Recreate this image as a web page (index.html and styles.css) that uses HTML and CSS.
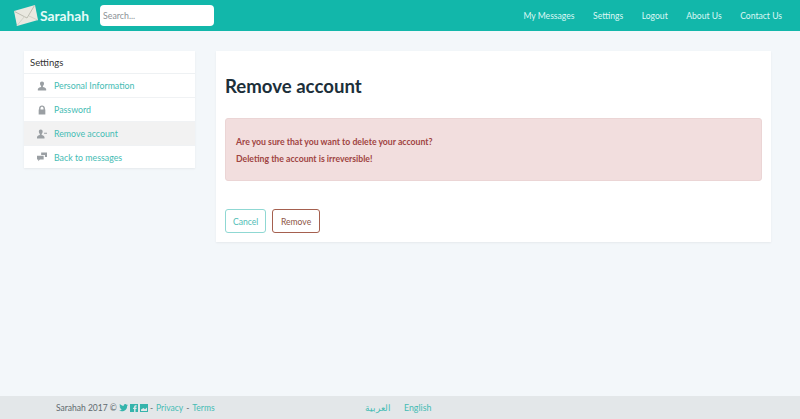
FILE: index.html
```html
<!DOCTYPE html>
<html lang="en">
<head>
  <meta charset="UTF-8" />
  <meta name="viewport" content="width=device-width, initial-scale=1.0" />
  <title>Sarahah - Remove account</title>
  <link rel="stylesheet" href="styles.css">
</head>
<body>
  <nav class="navbar">
    <a class="brand" href="#">
      <svg class="brand-icon" width="26" height="21" viewBox="0 0 26 21">
        <polygon points="1,6 22,0 25,15 4,21" fill="#e9e8e0"/>
        <polyline points="1.5,6.5 14,13 21.5,0.5" fill="none" stroke="#bdbdb2" stroke-width="1"/>
        <polyline points="4,20.5 11.5,11.5" fill="none" stroke="#d3d3ca" stroke-width="1"/>
        <polyline points="16,11 24.5,15" fill="none" stroke="#d3d3ca" stroke-width="1"/>
      </svg>
      <span>Sarahah</span>
    </a>
    <input class="search" type="text" placeholder="Search..." />
    <ul class="nav-links">
      <li><a href="#">My Messages</a></li>
      <li><a href="#">Settings</a></li>
      <li><a href="#">Logout</a></li>
      <li><a href="#">About Us</a></li>
      <li><a href="#">Contact Us</a></li>
    </ul>
  </nav>

  <div class="content">
    <aside class="sidebar">
      <div class="sidebar-title">Settings</div>
      <a class="sidebar-item" href="#">
        <svg class="item-icon" width="10" height="10" viewBox="0 0 12 11"><path d="M6 0c1.600 0 2.400 1.100 2.400 2.600 0 1.200-.6 2.400-1.300 2.900v1.100c1.600.5 3.900 1.200 3.900 2.600V11H1V9.200c0-1.400 2.300-2.100 3.900-2.600V5.500C4.200 5 3.600 3.800 3.600 2.600 3.600 1.100 4.400 0 6 0z"/></svg>
        Personal Information
      </a>
      <a class="sidebar-item" href="#">
        <svg class="item-icon" width="10" height="10" viewBox="0 0 12 11"><path d="M2.500 5V3.500C2.500 1.500 4 0 6 0s3.500 1.500 3.500 3.500V5h.5v6H2V5zM4.200 5h3.600V3.500C7.800 2.500 7 1.700 6 1.700s-1.800.8-1.800 1.800z"/></svg>
        Password
      </a>
      <a class="sidebar-item active" href="#">
        <svg class="item-icon" width="10" height="10" viewBox="0 0 12 11"><path d="M4.500 0c1.500 0 2.300 1.100 2.300 2.600 0 1.200-.6 2.400-1.200 2.900v1.100c1.500.5 3.400 1.200 3.400 2.600V11H0V9.200c0-1.400 1.900-2.100 3.400-2.600V5.500C2.800 5 2.200 3.800 2.200 2.600 2.200 1.100 3 0 4.500 0zM8.500 4h3.500v1.200H8.500z"/></svg>
        Remove account
      </a>
      <a class="sidebar-item" href="#">
        <svg class="item-icon" width="10" height="10" viewBox="0 0 12 11"><path d="M5 0h7v5.500H9.500V3H5zM0 4h8v4.500H3.500L1.500 10.500V8.500H0z"/></svg>
        Back to messages
      </a>
    </aside>

    <main class="panel">
      <h1>Remove account</h1>
      <div class="alert">
        <p>Are you sure that you want to delete your account?</p>
        <p>Deleting the account is irreversible!</p>
      </div>
      <div class="actions">
        <a class="btn btn-cancel" href="#">Cancel</a>
        <a class="btn btn-remove" href="#">Remove</a>
      </div>
    </main>
  </div>

  <footer class="footer">
    <div class="footer-left">
      <span>Sarahah 2017 &copy;</span>
      <svg class="social" width="9" height="8" viewBox="0 0 9 8"><path d="M9 1c-.3.2-.7.3-1 .3.4-.2.6-.5.8-.9-.3.2-.7.3-1.100.4C7.300.3 6.800 0 6.300 0 5.200 0 4.500 1 4.700 2 3.200 1.900 1.800 1.200.9.1.400 1 .7 2 1.400 2.500c-.3 0-.6-.1-.8-.2 0 .9.600 1.700 1.500 1.900-.3.1-.6.1-.8 0 .2.700.9 1.300 1.700 1.300C2.200 6.100 1.100 6.500 0 6.400 2.900 8.300 8.300 7 8.100 2c.4-.3.700-.6.900-1z"/></svg>
      <svg class="social" width="8" height="8" viewBox="0 0 8 8"><path d="M0 0h8v8H5.500V5h1l.2-1.300H5.500V3c0-.4.100-.6.600-.6h.6V1.200H5.800C4.700 1.200 4.100 1.900 4.100 2.900v.8h-1V5h1v3H0z"/></svg>
      <svg class="social" width="8" height="8" viewBox="0 0 8 8"><path d="M0 0h8v8H0zM1 5.500v1.500h6V3.500L5 5.200 3.500 4z" fill-rule="evenodd"/></svg>
      <span>-</span>
      <a href="#">Privacy</a>
      <span>-</span>
      <a href="#">Terms</a>
    </div>
    <div class="footer-langs">
      <a href="#" lang="ar">العربية</a>
      <a href="#">English</a>
    </div>
  </footer>
</body>
</html>
```

FILE: styles.css
```css
* {
  margin: 0;
  padding: 0;
  box-sizing: border-box;
}
html, body {
  height: 100%;
}
body {
  display: flex;
  flex-direction: column;
  background: #f3f7fa;
  font-family: "Lato", "Noto Sans", sans-serif;
  font-size: 8.8px;
  color: #5f6a6f;
}
a {
  color: #45bcb4;
  text-decoration: none;
}
.navbar {
  height: 31px;
  flex-shrink: 0;
  display: flex;
  align-items: center;
  background: #12b7aa;
  padding-left: 13px;
}
.brand {
  display: flex;
  align-items: center;
  gap: 1px;
  width: 87px;
  color: #e4fbf8;
  font-size: 13.8px;
  font-weight: 700;
}
.search {
  width: 114px;
  height: 21px;
  border: none;
  outline: none;
  border-radius: 4px;
  background: #fff;
  padding: 0 3px;
  font-family: inherit;
  font-size: 8.8px;
}
.search::placeholder {
  color: #8c9296;
}
.nav-links {
  margin-left: auto;
  padding-right: 18px;
  display: flex;
  gap: 18.5px;
  list-style: none;
}
.nav-links a {
  color: #dcf8f5;
  font-size: 8.6px;
}
.content {
  flex: 1;
  display: flex;
  align-items: flex-start;
  gap: 21px;
  padding: 20px 29px 0 24px;
}
.sidebar {
  width: 171px;
  flex-shrink: 0;
  background: #fff;
  box-shadow: 0 1px 2px rgba(0, 0, 0, 0.06);
}
.sidebar-title {
  height: 23px;
  line-height: 23px;
  padding-left: 6px;
  color: #333;
  font-size: 9.5px;
  border-bottom: 1px solid #eef1f3;
}
.sidebar-item {
  height: 24px;
  display: flex;
  align-items: center;
  gap: 7px;
  padding-left: 13px;
  border-bottom: 1px solid #f0f2f4;
}
.sidebar-item:last-child {
  height: 22px;
  border-bottom: none;
}
.sidebar-item.active {
  background: #f2f2f2;
}
.item-icon {
  fill: #9a9fa3;
}
.panel {
  flex: 1;
  height: 191px;
  background: #fff;
  padding: 0 9px;
  box-shadow: 0 1px 2px rgba(0, 0, 0, 0.06);
}
.panel h1 {
  margin-top: 24px;
  font-size: 18.6px;
  line-height: 22px;
  font-weight: 700;
  color: #1c2f3a;
}
.alert {
  margin-top: 21px;
  height: 63px;
  padding: 17px 10px 0;
  background: #f2dede;
  border: 1px solid #ebd5d5;
  border-radius: 3px;
  color: #a04442;
  font-size: 8.7px;
  font-weight: 700;
}
.alert p {
  line-height: 12px;
  margin-bottom: 5px;
}
.actions {
  margin-top: 28px;
  display: flex;
  gap: 6px;
}
.btn {
  height: 24px;
  display: flex;
  align-items: center;
  padding: 1px 7px 0;
  border-radius: 3px;
  background: #fff;
  font-size: 8.6px;
}
.btn-cancel {
  border: 1px solid #8fd8d3;
  color: #4fbdb5;
}
.btn-remove {
  border: 1px solid #a5604f;
  color: #8d5546;
  padding: 1px 7.5px 0;
}
.footer {
  height: 23px;
  flex-shrink: 0;
  display: flex;
  align-items: center;
  background: #e3e7e9;
  padding-left: 56px;
}
.footer-left {
  display: flex;
  align-items: center;
  gap: 2px;
  width: 309px;
  font-size: 8.5px;
}
.footer-left a {
  margin: 0 1px;
}
.social {
  fill: #35b4ac;
}
.footer-langs {
  display: flex;
  gap: 13px;
}
```
